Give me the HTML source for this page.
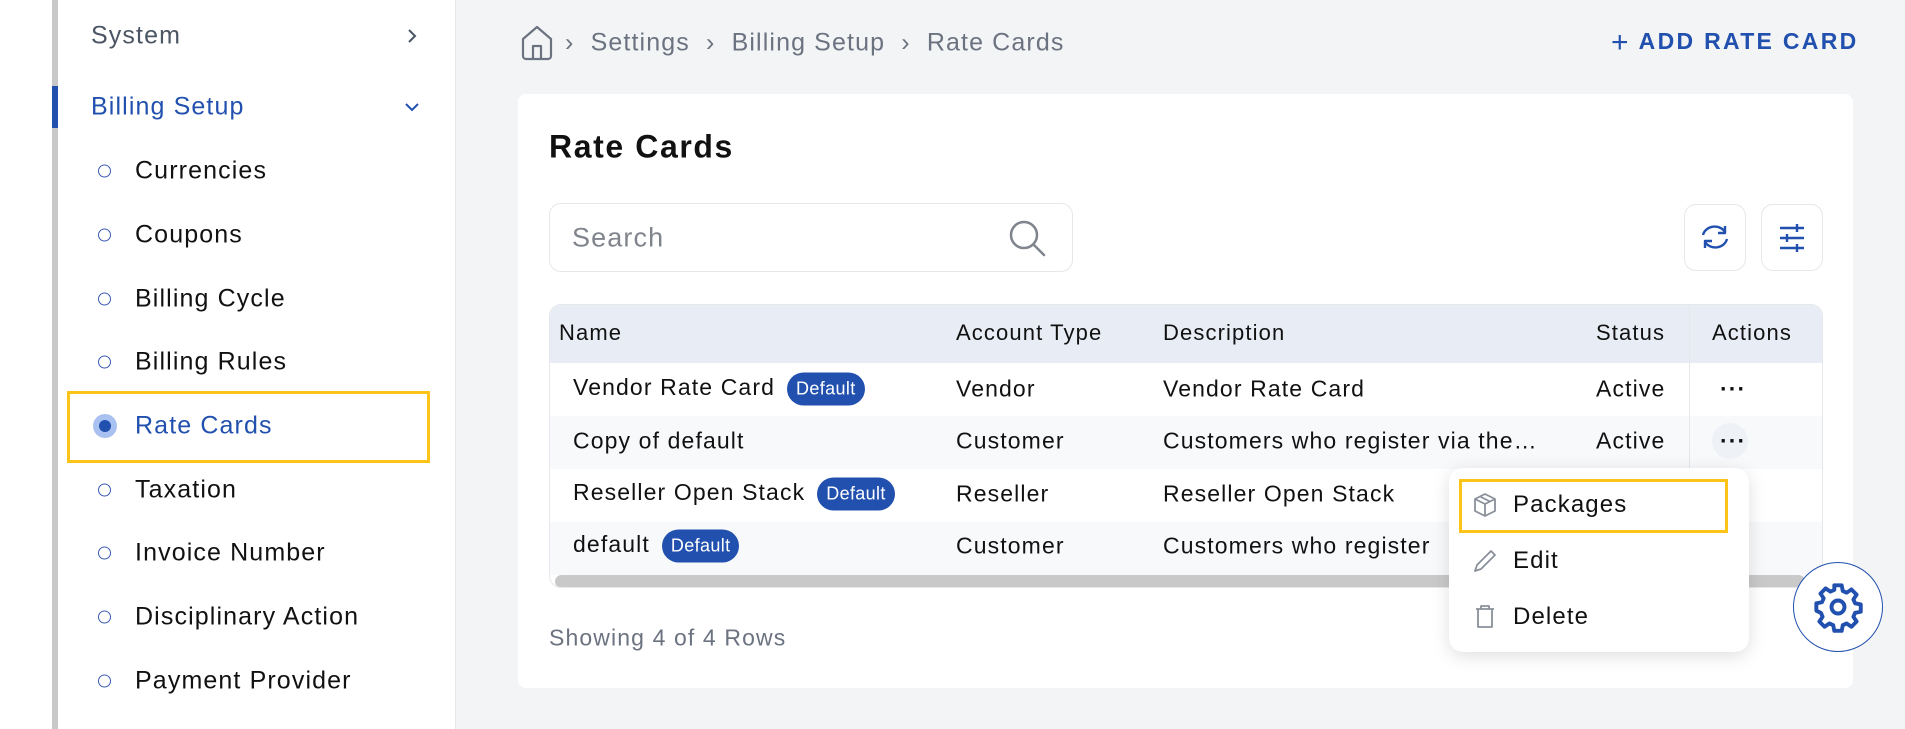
<!DOCTYPE html>
<html><head><meta charset="utf-8"><style>
*{box-sizing:border-box;margin:0;padding:0}
body{width:1905px;height:729px;overflow:hidden;background:#f3f4f6;font-family:"Liberation Sans",sans-serif;position:relative;color:#111;letter-spacing:0.07em}
.a{position:absolute;white-space:nowrap}
.side{position:absolute;left:0;top:0;width:456px;height:729px;background:#fff;border-right:1px solid #e5e7eb}
.si{position:absolute;left:135px;font-size:25px;color:#111;transform:translateY(-50%)}
.dot{position:absolute;left:98px;width:13px;height:13px;border:1.5px solid #3b5bb5;border-radius:50%;transform:translateY(-50%)}
.th{position:absolute;font-size:22px;color:#111;top:333px;transform:translateY(-50%)}
.td{position:absolute;font-size:23px;color:#111;transform:translateY(-50%)}
.badge{display:inline-block;background:#2150ae;color:#fff;font-size:18px;letter-spacing:0.02em;border-radius:18px;padding:6px 9px;vertical-align:middle;margin-left:12px}
</style></head><body>
<div class="side">
  <div class="a" style="left:52px;top:0;width:6px;height:729px;background:#c8c8c8"></div>
  <div class="a" style="left:52px;top:86px;width:6px;height:42px;background:#2150ae"></div>
  <div class="a" style="left:91px;top:36px;font-size:25px;color:#4b5563;transform:translateY(-50%)">System</div>
  <svg class="a" style="left:405px;top:27px" width="14" height="18" viewBox="0 0 14 18"><path d="M4 3l6 6-6 6" fill="none" stroke="#4b5563" stroke-width="2"/></svg>
  <div class="a" style="left:91px;top:107px;font-size:25px;color:#2150ae;transform:translateY(-50%)">Billing Setup</div>
  <svg class="a" style="left:403px;top:101px" width="18" height="12" viewBox="0 0 18 12"><path d="M3 3l6 6 6-6" fill="none" stroke="#2150ae" stroke-width="2"/></svg>
  <div class="dot" style="top:171px"></div><div class="si" style="top:171px">Currencies</div>
  <div class="dot" style="top:235px"></div><div class="si" style="top:235px">Coupons</div>
  <div class="dot" style="top:299px"></div><div class="si" style="top:299px">Billing Cycle</div>
  <div class="dot" style="top:362px"></div><div class="si" style="top:362px">Billing Rules</div>
  <div class="a" style="left:67px;top:391px;width:363px;height:72px;border:3.5px solid #fcc419"></div>
  <div class="a" style="left:93px;top:414px;width:24px;height:24px;border-radius:50%;background:#a9c1f0"></div>
  <div class="a" style="left:99px;top:420px;width:12px;height:12px;border-radius:50%;background:#2150ae"></div>
  <div class="si" style="top:426px;color:#2150ae">Rate Cards</div>
  <div class="dot" style="top:490px"></div><div class="si" style="top:490px">Taxation</div>
  <div class="dot" style="top:553px"></div><div class="si" style="top:553px">Invoice Number</div>
  <div class="dot" style="top:617px"></div><div class="si" style="top:617px">Disciplinary Action</div>
  <div class="dot" style="top:681px"></div><div class="si" style="top:681px">Payment Provider</div>
</div>

<svg class="a" style="left:520px;top:25px" width="34" height="36" viewBox="0 0 34 36"><path d="M3 14L17 2l14 12v17a3 3 0 0 1-3 3H6a3 3 0 0 1-3-3z M13 34V21h8v13" fill="none" stroke="#6b7280" stroke-width="2.2" stroke-linejoin="round"/></svg>
<div class="a" style="left:565px;top:43px;transform:translateY(-50%);font-size:25px;color:#6b7280">›&nbsp;&nbsp;Settings&nbsp;&nbsp;›&nbsp;&nbsp;Billing Setup&nbsp;&nbsp;›&nbsp;&nbsp;Rate Cards</div>
<div class="a" style="left:1611px;top:43px;transform:translateY(-50%);font-size:23px;font-weight:bold;color:#2150ae;letter-spacing:0.1em"><span style="font-size:30px;font-weight:normal;vertical-align:-3px">+</span> ADD RATE CARD</div>

<div class="a" style="left:518px;top:94px;width:1335px;height:594px;background:#fff;border-radius:8px"></div>
<div class="a" style="left:549px;top:147px;transform:translateY(-50%);font-size:32px;font-weight:bold;letter-spacing:0.05em">Rate Cards</div>
<div class="a" style="left:549px;top:203px;width:524px;height:69px;border:1.5px solid #e5e7eb;border-radius:12px"></div>
<div class="a" style="left:572px;top:238px;transform:translateY(-50%);font-size:27px;color:#80858d">Search</div>
<svg class="a" style="left:1006px;top:217px" width="44" height="44" viewBox="0 0 44 44"><circle cx="18" cy="18" r="13" fill="none" stroke="#80858d" stroke-width="2.5"/><path d="M28 28l10 10" stroke="#80858d" stroke-width="2.5" stroke-linecap="round"/></svg>
<div class="a" style="left:1684px;top:204px;width:62px;height:67px;border:1.5px solid #e5e7eb;border-radius:12px"></div>
<svg class="a" style="left:1699px;top:221px" width="32" height="32" viewBox="0 0 32 32"><path d="M4 14a12 11 0 0 1 22-3M28 18a12 11 0 0 1-22 3M26 5v7h-7M6 27v-7h7" fill="none" stroke="#2150ae" stroke-width="2.4" stroke-linejoin="round"/></svg>
<div class="a" style="left:1761px;top:204px;width:62px;height:67px;border:1.5px solid #e5e7eb;border-radius:12px"></div>
<svg class="a" style="left:1777px;top:223px" width="30" height="30" viewBox="0 0 30 30"><path d="M3 5h24M3 15h24M3 25h24M20 1v8M10 11v8M20 21v8" stroke="#2150ae" stroke-width="2.4"/></svg>

<div class="a" style="left:549px;top:304px;width:1274px;height:284px;border:1.5px solid #e5e7eb;border-radius:12px;overflow:hidden">
  <div class="a" style="left:0;top:0;width:100%;height:58px;background:#e8edf5"></div>
  <div class="a" style="left:0;top:111px;width:100%;height:53px;background:#f8f9fb"></div>
  <div class="a" style="left:0;top:217px;width:100%;height:53px;background:#f8f9fb"></div>
  <div class="a" style="left:1139px;top:0;width:1px;height:270px;background:#e3e6ea"></div>
  <div class="a" style="left:5px;top:270px;width:1250px;height:13px;background:#c9c9c9;border-radius:7px"></div>
</div>
<div class="th" style="left:559px">Name</div>
<div class="th" style="left:956px">Account Type</div>
<div class="th" style="left:1163px">Description</div>
<div class="th" style="left:1596px">Status</div>
<div class="th" style="left:1712px">Actions</div>

<div class="td" style="left:573px;top:389px">Vendor Rate Card<span class="badge">Default</span></div>
<div class="td" style="left:956px;top:389px">Vendor</div>
<div class="td" style="left:1163px;top:389px">Vendor Rate Card</div>
<div class="td" style="left:1596px;top:389px">Active</div>
<div class="td" style="left:1720px;top:389px;font-weight:bold">···</div>

<div class="td" style="left:573px;top:441px">Copy of default</div>
<div class="td" style="left:956px;top:441px">Customer</div>
<div class="td" style="left:1163px;top:441px">Customers who register via the…</div>
<div class="td" style="left:1596px;top:441px">Active</div>
<div class="a" style="left:1712px;top:423px;width:36px;height:36px;border-radius:50%;background:#eef1f6"></div>
<div class="td" style="left:1720px;top:441px;font-weight:bold">···</div>

<div class="td" style="left:573px;top:494px">Reseller Open Stack<span class="badge">Default</span></div>
<div class="td" style="left:956px;top:494px">Reseller</div>
<div class="td" style="left:1163px;top:494px">Reseller Open Stack</div>

<div class="td" style="left:573px;top:546px">default<span class="badge">Default</span></div>
<div class="td" style="left:956px;top:546px">Customer</div>
<div class="td" style="left:1163px;top:546px">Customers who register</div>

<div class="a" style="left:549px;top:638px;transform:translateY(-50%);font-size:23px;color:#6b7280">Showing 4 of 4 Rows</div>

<div class="a" style="left:1449px;top:468px;width:300px;height:184px;background:#fff;border-radius:14px;box-shadow:0 4px 18px rgba(0,0,0,0.13)"></div>
<div class="a" style="left:1459px;top:479px;width:269px;height:54px;border:3.5px solid #fcc419"></div>
<svg class="a" style="left:1472px;top:492px" width="26" height="26" viewBox="0 0 26 26"><path d="M13 2l10 5v12l-10 5-10-5V7z M3 7l10 5 10-5 M13 12v12 M8 4.5l10 5" fill="none" stroke="#8a9099" stroke-width="1.8" stroke-linejoin="round"/></svg>
<div class="a" style="left:1513px;top:505px;transform:translateY(-50%);font-size:24px">Packages</div>
<svg class="a" style="left:1472px;top:548px" width="26" height="26" viewBox="0 0 26 26"><path d="M19 3l4 4L9 21l-6 2 2-6z" fill="none" stroke="#8a9099" stroke-width="1.8" stroke-linejoin="round"/></svg>
<div class="a" style="left:1513px;top:561px;transform:translateY(-50%);font-size:24px">Edit</div>
<svg class="a" style="left:1472px;top:604px" width="26" height="26" viewBox="0 0 26 26"><path d="M4 5h18M9 5V2h8v3M6 5v18h14V5" fill="none" stroke="#8a9099" stroke-width="1.8" stroke-linejoin="round"/></svg>
<div class="a" style="left:1513px;top:617px;transform:translateY(-50%);font-size:24px">Delete</div>

<div class="a" style="left:1793px;top:562px;width:90px;height:90px;border-radius:50%;border:1.5px solid #2150ae;background:#fff"></div>
<svg class="a" style="left:1812px;top:581px" width="52" height="52" viewBox="0 0 24 24"><path d="M10.3 2h3.4l.5 2.6 1.8.8 2.2-1.5 2.4 2.4-1.5 2.2.8 1.8 2.6.5v3.4l-2.6.5-.8 1.8 1.5 2.2-2.4 2.4-2.2-1.5-1.8.8-.5 2.6h-3.4l-.5-2.6-1.8-.8-2.2 1.5-2.4-2.4 1.5-2.2-.8-1.8L2 13.7v-3.4l2.6-.5.8-1.8-1.5-2.2 2.4-2.4 2.2 1.5 1.8-.8z" fill="none" stroke="#2150ae" stroke-width="1.8" stroke-linejoin="round"/><circle cx="12" cy="12" r="3" fill="none" stroke="#2150ae" stroke-width="1.8"/></svg>
</body></html>
